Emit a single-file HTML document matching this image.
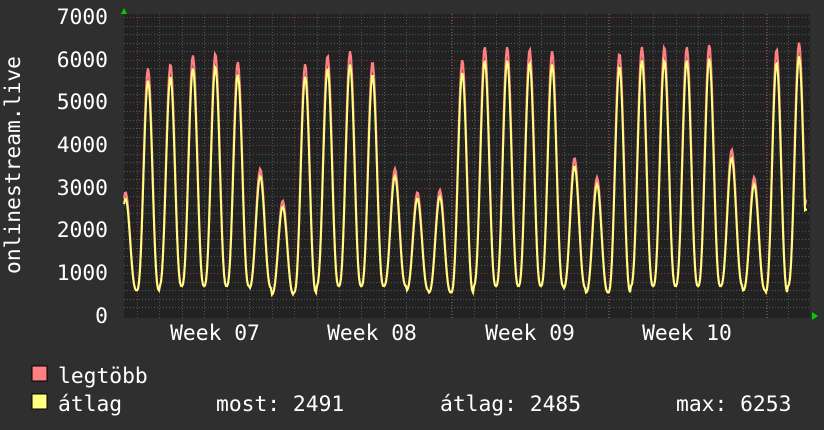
<!DOCTYPE html>
<html><head><meta charset="utf-8"><style>
html,body{margin:0;padding:0;background:#2f2f2f;}
svg{display:block;}
text{font-family:"DejaVu Sans Mono","Liberation Mono",monospace;fill:#fff;}
</style></head><body>
<svg id="g" width="824" height="430" xmlns="http://www.w3.org/2000/svg">
<rect width="824" height="430" fill="#2f2f2f"/>
<rect x="124" y="14" width="686" height="304" fill="#222"/>
<g id="grid"></g>
<polyline id="mx" fill="none" stroke="#ff8080" stroke-width="2.2"/>
<polyline id="av" fill="none" stroke="#ffff80" stroke-width="2"/>
<polygon points="121,14 127,14 124,8" fill="#0c0"/>
<polygon points="812,312 812,320 818,316" fill="#0c0"/>
<g font-size="21.3" text-anchor="end">
<text x="108" y="24">7000</text><text x="108" y="67">6000</text><text x="108" y="109">5000</text>
<text x="108" y="152">4000</text><text x="108" y="195">3000</text><text x="108" y="237">2000</text>
<text x="108" y="280">1000</text><text x="108" y="323">0</text>
</g>
<text x="20" y="165" font-size="21.3" text-anchor="middle" transform="rotate(-90 20 165)">onlinestream.live</text>
<g font-size="21.3" text-anchor="middle">
<text x="215" y="340">Week 07</text><text x="372" y="340">Week 08</text>
<text x="530" y="340">Week 09</text><text x="687" y="340">Week 10</text>
</g>
<rect x="32" y="366" width="15" height="15" fill="#ff8080" stroke="#000"/>
<rect x="32" y="394" width="15" height="15" fill="#ffff80" stroke="#000"/>
<g font-size="21.3">
<text x="58" y="383">legtöbb</text>
<text x="58" y="411">átlag</text>
<text x="216" y="411">most: 2491</text>
<text x="440" y="411">átlag: 2485</text>
<text x="676" y="411">max: 6253</text>
</g>
</svg>
<script>
var NS="http://www.w3.org/2000/svg",g=document.getElementById('grid');
function ln(x1,y1,x2,y2,c){var l=document.createElementNS(NS,'line');l.setAttribute('x1',x1);l.setAttribute('y1',y1);l.setAttribute('x2',x2);l.setAttribute('y2',y2);l.setAttribute('stroke',c);l.setAttribute('stroke-dasharray','1,2');g.appendChild(l);}
function Y(v){return 316-v*0.04271;}
for(var v=200;v<=7000;v+=200){var y=Math.round(Y(v))+0.5;ln(124,y,810,y,v%1000==0?'#7a3a3a':'#555');}
for(var x=137-22.45*5;x<810;x+=22.45){if(x<124)continue;ln(Math.round(x)+0.5,14,Math.round(x)+0.5,318,'#555');}
[137,294,452,609,767].forEach(function(x){ln(x+0.5,14,x+0.5,320,'#7a3a3a');});
var peaks=[2900,5800,5900,6100,6150,5950,3450,2700,5900,6100,6200,5950,3450,2900,2950,6000,6300,6300,6250,6200,3700,3250,6150,6300,6300,6300,6350,3900,3250,6250,6400];
var mins=[600,600,700,700,700,700,650,500,550,700,700,700,700,600,550,550,700,700,700,700,650,550,550,700,700,700,700,700,600,550,700,700];
var m=[],a=[];
for(var x=124;x<=807;x++){
 var d=(x-148)/22.45+1,i=Math.floor(d+0.5),t=d-Math.round(d);
 if(i<0)i=0;if(i>=peaks.length)i=peaks.length-1;
 var p=peaks[i],mn=mins[i];
 var f=Math.pow((1+Math.cos(2*Math.PI*t))/2,1.4);
 var vm=mn+(p-mn)*f,va=mn+(p*0.95-mn)*f;
 if(x>=806)va=2491,vm=2700;
 m.push(x+','+Y(vm).toFixed(1));a.push(x+','+Y(va).toFixed(1));
}
document.getElementById('mx').setAttribute('points',m.join(' '));
document.getElementById('av').setAttribute('points',a.join(' '));
</script>
</body></html>
